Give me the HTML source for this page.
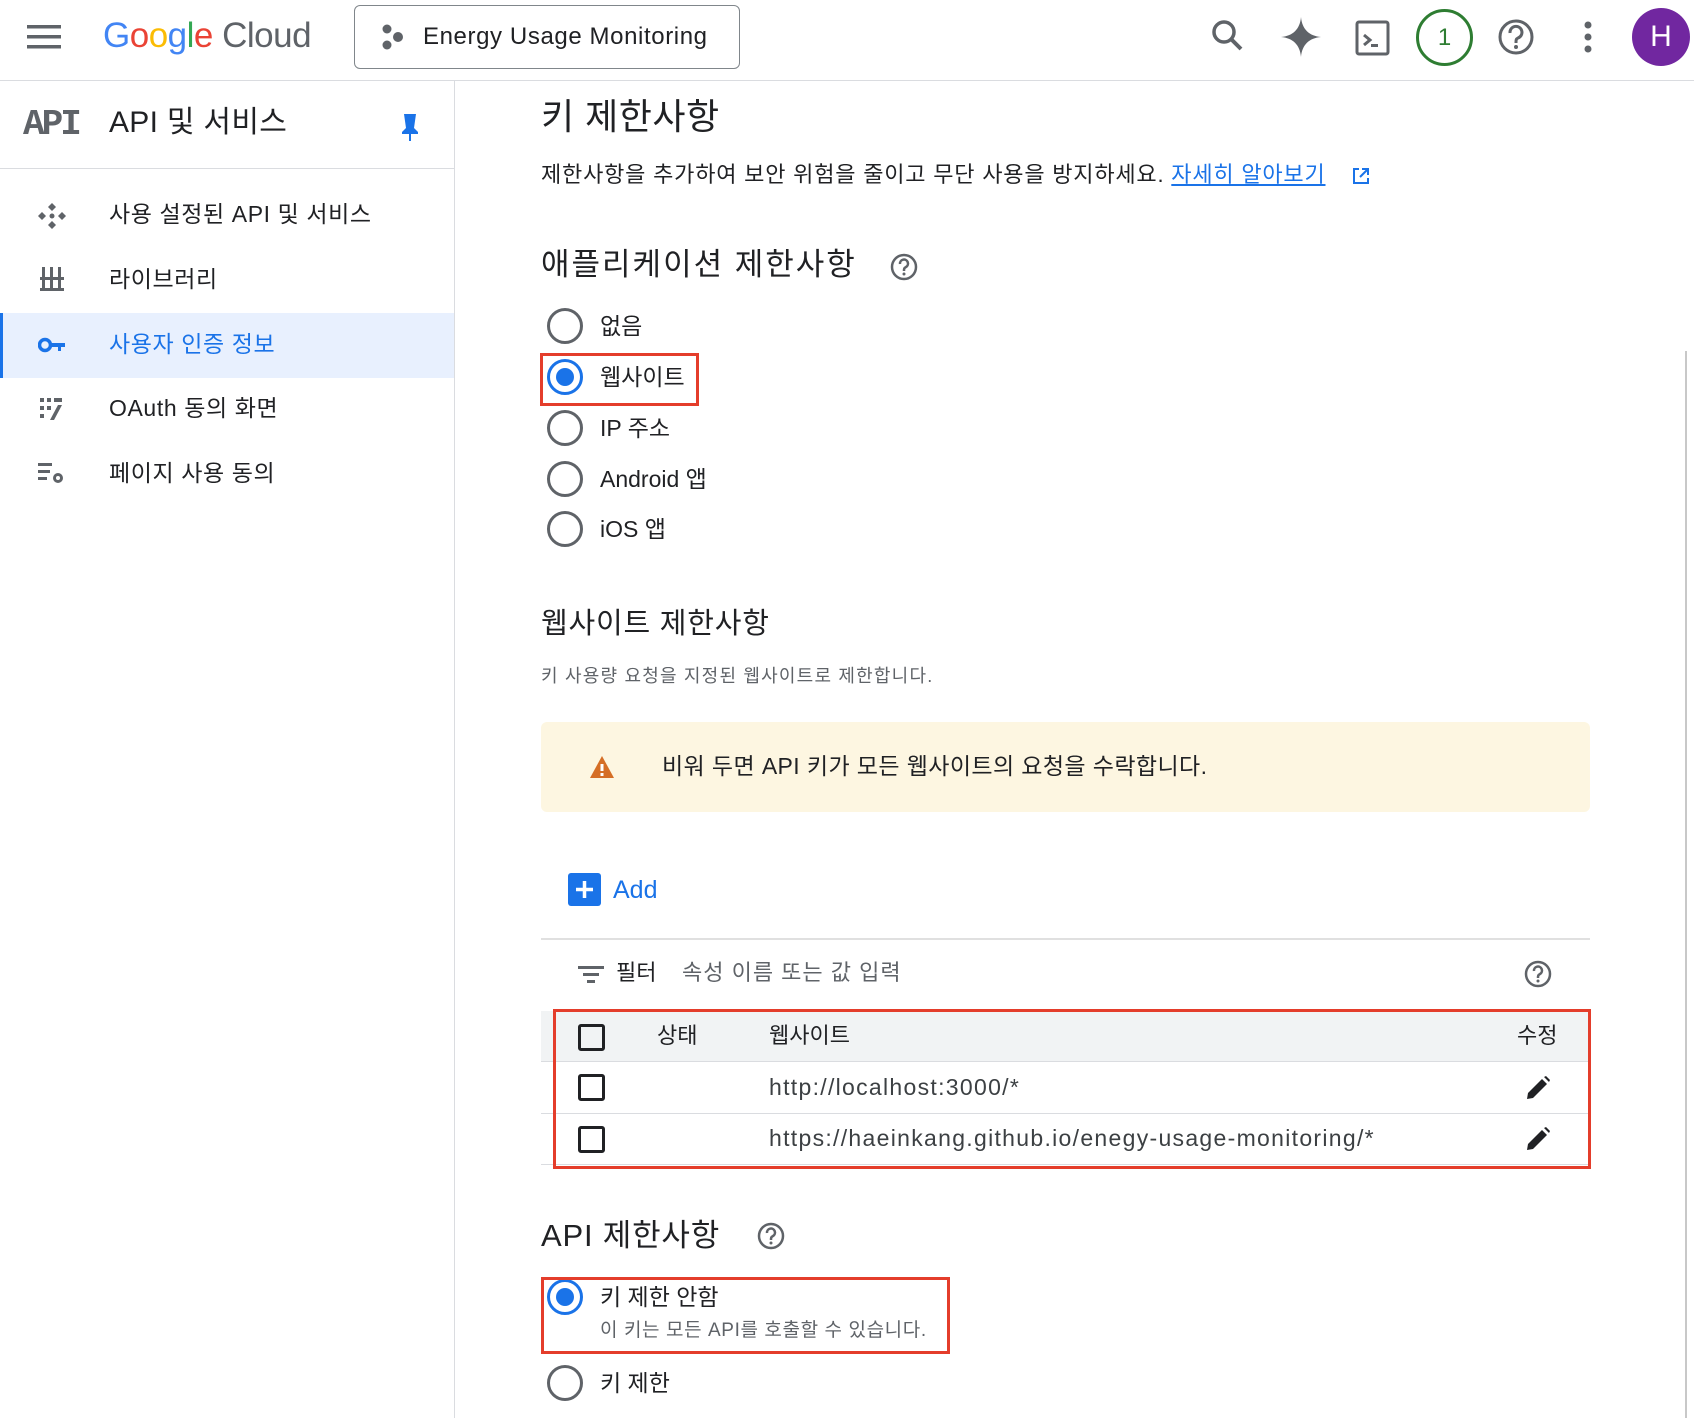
<!DOCTYPE html>
<html><head><meta charset="utf-8"><style>
*{margin:0;padding:0;box-sizing:border-box}
body{width:1694px;height:1418px;overflow:hidden;background:#fff;font-family:"Liberation Sans","Noto Sans CJK KR",sans-serif;color:#202124;position:relative}
.a{position:absolute;white-space:nowrap}
.t{position:absolute;white-space:nowrap;line-height:40px;height:40px}
.radio{position:absolute;width:36px;height:36px;border:3px solid #5f6368;border-radius:50%}
.radio.on{border-color:#1a73e8}
.radio.on:after{content:"";position:absolute;left:6px;top:6px;width:18px;height:18px;border-radius:50%;background:#1a73e8}
.cb{position:absolute;width:27px;height:27px;border:3px solid #202124;border-radius:3px}
.red{position:absolute;border:3px solid #e43d2b}
</style></head><body>
<!-- header -->
<div class="a" style="left:0;top:80px;width:1694px;height:1px;background:#dadce0"></div>
<svg class="a" style="left:27px;top:24px" width="36" height="26"><rect y="1" width="34" height="3.5" fill="#5f6368"/><rect y="11" width="34" height="3.5" fill="#5f6368"/><rect y="21" width="34" height="3.5" fill="#5f6368"/></svg>
<div class="t" style="left:103px;top:16px;font-size:35px;letter-spacing:-0.5px"><span style="color:#4285f4">G</span><span style="color:#ea4335">o</span><span style="color:#fbbc04">o</span><span style="color:#4285f4">g</span><span style="color:#34a853">l</span><span style="color:#ea4335">e</span><span style="color:#5f6368"> Cloud</span></div>
<div class="a" style="left:354px;top:5px;width:386px;height:64px;border:1.5px solid #80868b;border-radius:6px"></div>
<svg class="a" style="left:380px;top:24px" width="26" height="26"><circle cx="7" cy="5" r="4.5" fill="#5f6368"/><circle cx="18" cy="13" r="5" fill="#5f6368"/><circle cx="7" cy="21" r="4.5" fill="#5f6368"/></svg>
<div class="t" style="left:423px;top:17px;font-size:24px;letter-spacing:0.6px">Energy Usage Monitoring</div>
<svg class="a" style="left:1210px;top:18px" width="36" height="36"><circle cx="14" cy="14" r="10" fill="none" stroke="#5f6368" stroke-width="3.5"/><path d="M21 21l10 10" stroke="#5f6368" stroke-width="4"/></svg>
<svg class="a" style="left:1280px;top:16px" width="42" height="42"><path d="M21 1C22 13 29 20 41 21C29 22 22 29 21 41C20 29 13 22 1 21C13 20 20 13 21 1Z" fill="#5f6368"/></svg>
<svg class="a" style="left:1355px;top:20px" width="36" height="36"><rect x="2" y="2" width="31" height="32" rx="2" fill="none" stroke="#5f6368" stroke-width="3"/><path d="M9 15l6 5-6 5" fill="none" stroke="#5f6368" stroke-width="3"/><rect x="16" y="24" width="7" height="3" fill="#5f6368"/></svg>
<div class="a" style="left:1416px;top:9px;width:57px;height:57px;border:3px solid #2e7d32;border-radius:50%;text-align:center;line-height:51px;font-size:24px;color:#2e7d32">1</div>
<svg class="a" style="left:1497px;top:18px" width="38" height="38"><circle cx="19" cy="19" r="16" fill="none" stroke="#5f6368" stroke-width="3"/><path d="M13 15a6 6 0 1 1 8 5c-2 1-2 2-2 5" fill="none" stroke="#5f6368" stroke-width="3"/><circle cx="19" cy="29" r="2" fill="#5f6368"/></svg>
<svg class="a" style="left:1582px;top:20px" width="12" height="34"><circle cx="6" cy="5" r="3.5" fill="#5f6368"/><circle cx="6" cy="17" r="3.5" fill="#5f6368"/><circle cx="6" cy="29" r="3.5" fill="#5f6368"/></svg>
<div class="a" style="left:1632px;top:8px;width:58px;height:58px;border-radius:50%;background:#7127a0;color:#fff;text-align:center;line-height:58px;font-size:30px">H</div>
<!-- sidebar -->
<div class="a" style="left:454px;top:81px;width:1px;height:1337px;background:#dadce0"></div>
<div class="t" style="left:23px;top:105px;font-size:36px;font-weight:bold;color:#5f6368;font-family:'Liberation Mono',monospace;letter-spacing:-3px">API</div>
<div class="t" style="left:109px;top:103px;font-size:30px;letter-spacing:0.3px">API 및 서비스</div>
<svg class="a" style="left:399px;top:112px" width="22" height="30"><path d="M5 2h12l-2 14 4 4v2H3v-2l4-4z" fill="#1a73e8"/><rect x="10" y="21" width="2" height="8" fill="#1a73e8"/></svg>
<div class="a" style="left:0;top:168px;width:454px;height:1px;background:#dadce0"></div>
<div class="a" style="left:0;top:313px;width:454px;height:65px;background:#e8f0fe"></div>
<div class="a" style="left:0;top:313px;width:3px;height:65px;background:#1a73e8"></div>
<svg class="a" style="left:38px;top:203px" width="28" height="26"><g fill="#5f6368"><path d="M14 0l4 4-4 4-4-4z"/><path d="M14 18l4 4-4 4-4-4z"/><path d="M0 13l4-4 4 4-4 4z"/><path d="M20 13l4-4 4 4-4 4z"/><circle cx="14" cy="13" r="2.5"/></g></svg>
<div class="t" style="left:109px;top:194px;font-size:23px;letter-spacing:0.6px">사용 설정된 API 및 서비스</div>
<svg class="a" style="left:40px;top:267px" width="24" height="24"><g fill="#5f6368"><rect x="2" y="0" width="3" height="10"/><rect x="10" y="0" width="3" height="10"/><rect x="18" y="0" width="3" height="10"/><rect x="0" y="10" width="24" height="3"/><rect x="2" y="13" width="3" height="9"/><rect x="10" y="13" width="3" height="9"/><rect x="18" y="13" width="3" height="9"/><rect x="0" y="21" width="24" height="3"/></g></svg>
<div class="t" style="left:109px;top:259px;font-size:23px;letter-spacing:0.6px">라이브러리</div>
<svg class="a" style="left:38px;top:335px" width="28" height="20"><circle cx="7" cy="10" r="5.5" fill="none" stroke="#1a73e8" stroke-width="3.5"/><rect x="12" y="8" width="15" height="4" fill="#1a73e8"/><rect x="20" y="10" width="3" height="6" fill="#1a73e8"/></svg>
<div class="t" style="left:109px;top:324px;font-size:23px;color:#1a73e8;letter-spacing:0.6px">사용자 인증 정보</div>
<svg class="a" style="left:40px;top:398px" width="24" height="22"><g fill="#5f6368"><rect x="0" y="0" width="4" height="4"/><rect x="7" y="0" width="4" height="4"/><rect x="14" y="0" width="8" height="4"/><rect x="0" y="8" width="4" height="4"/><rect x="7" y="8" width="4" height="4"/><path d="M18 7h4l-8 15h-4z"/><rect x="0" y="16" width="4" height="4"/></g></svg>
<div class="t" style="left:109px;top:388px;font-size:23px;letter-spacing:0.6px">OAuth 동의 화면</div>
<svg class="a" style="left:38px;top:462px" width="28" height="24"><g fill="#5f6368"><rect x="0" y="1" width="14" height="3"/><rect x="0" y="8" width="12" height="3"/><rect x="0" y="15" width="9" height="3"/><circle cx="20" cy="16" r="5"/></g><circle cx="20" cy="16" r="2" fill="#fff"/></svg>
<div class="t" style="left:109px;top:453px;font-size:23px;letter-spacing:0.6px">페이지 사용 동의</div>
<!-- main -->
<div class="t" style="left:541px;top:94px;font-size:36px;height:46px;line-height:46px;letter-spacing:0.5px">키 제한사항</div>
<div class="t" style="left:541px;top:155px;font-size:22px;letter-spacing:0.8px">제한사항을 추가하여 보안 위험을 줄이고 무단 사용을 방지하세요. <span style="color:#1a73e8;text-decoration:underline">자세히 알아보기</span></div>
<svg class="a" style="left:1352px;top:167px" width="18" height="18"><path d="M7 2H2v14h14v-5" fill="none" stroke="#1a73e8" stroke-width="2"/><path d="M10 2h6v6M16 2L8 10" fill="none" stroke="#1a73e8" stroke-width="2"/></svg>
<div class="t" style="left:541px;top:243px;font-size:31px;height:44px;line-height:44px;letter-spacing:2px">애플리케이션 제한사항</div>
<svg class="a" style="left:890px;top:253px" width="28" height="28"><circle cx="14" cy="14" r="12" fill="none" stroke="#5f6368" stroke-width="2.5"/><path d="M10 11a4 4 0 1 1 6 3c-2 1-2 2-2 4" fill="none" stroke="#5f6368" stroke-width="2.5"/><circle cx="14" cy="21" r="1.5" fill="#5f6368"/></svg>
<div class="radio" style="left:547px;top:308px"></div><div class="t" style="left:600px;top:306px;font-size:23px">없음</div>
<div class="radio on" style="left:547px;top:359px"></div><div class="t" style="left:600px;top:357px;font-size:23px">웹사이트</div>
<div class="red" style="left:540px;top:353px;width:159px;height:53px"></div>
<div class="radio" style="left:547px;top:410px"></div><div class="t" style="left:600px;top:408px;font-size:23px">IP 주소</div>
<div class="radio" style="left:547px;top:461px"></div><div class="t" style="left:600px;top:459px;font-size:23px">Android 앱</div>
<div class="radio" style="left:547px;top:511px"></div><div class="t" style="left:600px;top:509px;font-size:23px">iOS 앱</div>
<div class="t" style="left:541px;top:603px;font-size:29px;height:42px;line-height:42px;letter-spacing:0.8px">웹사이트 제한사항</div>
<div class="t" style="left:541px;top:658px;font-size:18px;line-height:36px;color:#5f6368;letter-spacing:1.2px">키 사용량 요청을 지정된 웹사이트로 제한합니다.</div>
<div class="a" style="left:541px;top:722px;width:1049px;height:90px;background:#fdf6e1;border-radius:6px"></div>
<svg class="a" style="left:589px;top:755px" width="26" height="24"><path d="M13 1L25 23H1Z" fill="#d56e25"/><rect x="11.5" y="9" width="3" height="7" fill="#fff"/><rect x="11.5" y="18" width="3" height="3" fill="#fff"/></svg>
<div class="t" style="left:662px;top:746px;font-size:23px;letter-spacing:0.4px">비워 두면 API 키가 모든 웹사이트의 요청을 수락합니다.</div>
<div class="a" style="left:568px;top:873px;width:33px;height:33px;background:#1a73e8;border-radius:3px"></div>
<svg class="a" style="left:568px;top:873px" width="33" height="33"><path d="M16.5 8v17M8 16.5h17" stroke="#fff" stroke-width="3.5"/></svg>
<div class="t" style="left:613px;top:870px;font-size:25px;color:#1a73e8">Add</div>
<div class="a" style="left:541px;top:938px;width:1049px;height:2px;background:#e0e0e0"></div>
<svg class="a" style="left:578px;top:965px" width="26" height="20"><g fill="#5f6368"><rect x="0" y="1" width="26" height="3"/><rect x="5" y="8" width="16" height="3"/><rect x="9" y="15" width="8" height="3"/></g></svg>
<div class="t" style="left:616px;top:953px;font-size:22px">필터</div>
<div class="t" style="left:682px;top:953px;font-size:22px;color:#5f6368;letter-spacing:1px">속성 이름 또는 값 입력</div>
<svg class="a" style="left:1524px;top:960px" width="28" height="28"><circle cx="14" cy="14" r="12" fill="none" stroke="#5f6368" stroke-width="2.5"/><path d="M10 11a4 4 0 1 1 6 3c-2 1-2 2-2 4" fill="none" stroke="#5f6368" stroke-width="2.5"/><circle cx="14" cy="21" r="1.5" fill="#5f6368"/></svg>
<div class="a" style="left:541px;top:1011px;width:1049px;height:51px;background:#f1f3f4;border-bottom:1px solid #dadce0"></div>
<div class="a" style="left:541px;top:1113px;width:1049px;height:1px;background:#dadce0"></div>
<div class="a" style="left:541px;top:1164px;width:1049px;height:1px;background:#dadce0"></div>
<div class="cb" style="left:578px;top:1024px"></div>
<div class="t" style="left:657px;top:1016px;font-size:22px">상태</div>
<div class="t" style="left:769px;top:1016px;font-size:22px">웹사이트</div>
<div class="t" style="left:1517px;top:1016px;font-size:22px">수정</div>
<div class="cb" style="left:578px;top:1074px"></div>
<div class="t" style="left:769px;top:1067px;font-size:23px;color:#3c4043;letter-spacing:1.3px">http://localhost:3000/*</div>
<div class="cb" style="left:578px;top:1126px"></div>
<div class="t" style="left:769px;top:1118px;font-size:23px;color:#3c4043;letter-spacing:1.3px">https://haeinkang.github.io/enegy-usage-monitoring/*</div>
<svg class="a" style="left:1525px;top:1075px" width="26" height="26"><path d="M2 24l1-6L17 4l5 5L8 23z" fill="#202124"/><path d="M19 2l2-1 4 4-1 2z" fill="#202124"/></svg>
<svg class="a" style="left:1525px;top:1126px" width="26" height="26"><path d="M2 24l1-6L17 4l5 5L8 23z" fill="#202124"/><path d="M19 2l2-1 4 4-1 2z" fill="#202124"/></svg>
<div class="red" style="left:553px;top:1009px;width:1038px;height:160px"></div>
<div class="t" style="left:541px;top:1214px;font-size:31px;height:44px;line-height:44px;letter-spacing:0.8px">API 제한사항</div>
<svg class="a" style="left:757px;top:1222px" width="28" height="28"><circle cx="14" cy="14" r="12" fill="none" stroke="#5f6368" stroke-width="2.5"/><path d="M10 11a4 4 0 1 1 6 3c-2 1-2 2-2 4" fill="none" stroke="#5f6368" stroke-width="2.5"/><circle cx="14" cy="21" r="1.5" fill="#5f6368"/></svg>
<div class="radio on" style="left:547px;top:1279px"></div><div class="t" style="left:600px;top:1277px;font-size:23px">키 제한 안함</div>
<div class="t" style="left:600px;top:1311px;font-size:19px;color:#5f6368;letter-spacing:0.6px">이 키는 모든 API를 호출할 수 있습니다.</div>
<div class="red" style="left:541px;top:1277px;width:409px;height:77px"></div>
<div class="radio" style="left:547px;top:1365px"></div><div class="t" style="left:600px;top:1363px;font-size:23px">키 제한</div>
<div class="a" style="left:1685px;top:351px;width:9px;height:1067px;background:#fff;border-left:2px solid #c8c8c8"></div>
</body></html>
